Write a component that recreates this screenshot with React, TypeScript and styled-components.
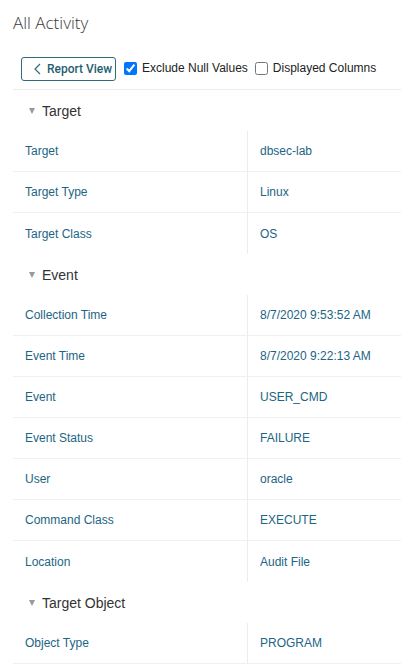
import React from "react";
import styled, { createGlobalStyle } from "styled-components";

const Global = createGlobalStyle`
  html, body { margin: 0; padding: 0; background: #fff; }
  body { font-family: "Liberation Sans", Arial, sans-serif; }
`;

const Page = styled.div`
  padding: 0 0 0 13px;
  width: 388px;
  overflow: hidden;
`;

const Title = styled.h1`
  margin: 0;
  padding-top: 11px;
  height: 56px;
  box-sizing: border-box;
  font-family: "Open Sans", sans-serif;
  font-weight: 300;
  font-size: 17px;
  line-height: 24px;
  color: #3a3a3a;
`;

const Toolbar = styled.div`
  display: flex;
  align-items: flex-start;
  padding: 1px 0 0 8px;
  height: 34px;
  box-sizing: border-box;
  border-bottom: 1px solid #ececec;
`;

const BackButton = styled.button`
  display: flex;
  align-items: center;
  gap: 6px;
  height: 24px;
  width: 95px;
  padding: 0 0 0 12px;
  box-sizing: border-box;
  border: 1px solid #2e6b7d;
  border-radius: 3px;
  background: #fff;
  color: #1f5f70;
  font-family: Roboto, "Liberation Sans", sans-serif;
  font-weight: 500;
  font-size: 12px;
  white-space: nowrap;
  cursor: pointer;
`;

const CheckLabel = styled.label<{ $first?: boolean }>`
  display: flex;
  align-items: center;
  height: 22px;
  font-size: 12px;
  color: #222;
  white-space: nowrap;
  margin-left: ${(p) => (p.$first ? "8px" : "7px")};
  input {
    margin: 0 5px 0 0;
    width: 13px;
    height: 13px;
  }
`;

const Section = styled.section``;

const SectionHeader = styled.div`
  display: flex;
  align-items: center;
  height: 41px;
  padding-left: 16px;
  font-size: 14px;
  color: #333;
  gap: 7px;
`;

const Caret = styled.span`
  width: 0;
  height: 0;
  border-left: 3.5px solid transparent;
  border-right: 3.5px solid transparent;
  border-top: 6px solid #999;
  margin-top: 1px;
`;

const Row = styled.div<{ $last?: boolean }>`
  display: grid;
  grid-template-columns: 234px 1fr;
  height: 41px;
  box-sizing: border-box;
  border-bottom: ${(p) => (p.$last ? "none" : "1px solid #f0f0f0")};
`;

const Cell = styled.div<{ $value?: boolean }>`
  display: flex;
  align-items: center;
  padding-left: 12px;
  font-size: 12px;
  color: #1c6584;
  border-left: ${(p) => (p.$value ? "1px solid #ececec" : "none")};
`;

const Chevron = () => (
  <svg width="7" height="12" viewBox="0 0 7 12" fill="none">
    <path d="M6 1L1 6L6 11" stroke="#2e6b7d" strokeWidth="1.2" />
  </svg>
);

const data: { title: string; rows: [string, string][]; bordered?: boolean }[] = [
  {
    title: "Target",
    rows: [
      ["Target", "dbsec-lab"],
      ["Target Type", "Linux"],
      ["Target Class", "OS"],
    ],
  },
  {
    title: "Event",
    rows: [
      ["Collection Time", "8/7/2020 9:53:52 AM"],
      ["Event Time", "8/7/2020 9:22:13 AM"],
      ["Event", "USER_CMD"],
      ["Event Status", "FAILURE"],
      ["User", "oracle"],
      ["Command Class", "EXECUTE"],
      ["Location", "Audit File"],
    ],
  },
  {
    title: "Target Object",
    bordered: true,
    rows: [["Object Type", "PROGRAM"]],
  },
];

export default function App() {
  return (
    <Page>
      <Global />
      <Title>All Activity</Title>
      <Toolbar>
        <BackButton>
          <Chevron />
          Report View
        </BackButton>
        <CheckLabel $first>
          <input type="checkbox" defaultChecked />
          Exclude Null Values
        </CheckLabel>
        <CheckLabel>
          <input type="checkbox" />
          Displayed Columns
        </CheckLabel>
      </Toolbar>
      {data.map((s) => (
        <Section key={s.title}>
          <SectionHeader>
            <Caret />
            {s.title}
          </SectionHeader>
          {s.rows.map(([k, v], i) => (
            <Row key={k} $last={i === s.rows.length - 1 && !s.bordered}>
              <Cell>{k}</Cell>
              <Cell $value>{v}</Cell>
            </Row>
          ))}
        </Section>
      ))}
    </Page>
  );
}
